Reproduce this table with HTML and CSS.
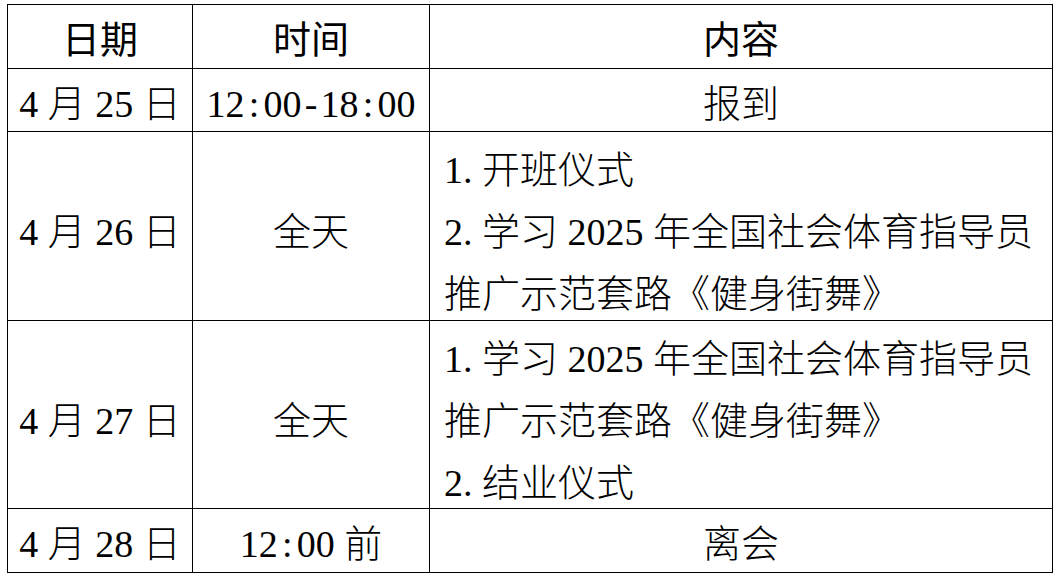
FILE: index.html
```html
<!DOCTYPE html>
<html lang="zh-CN">
<head>
<meta charset="utf-8">
<title>日程安排</title>
<link rel="stylesheet" href="styles.css">
</head>
<body>
<table class="schedule">
  <colgroup>
    <col class="c-date">
    <col class="c-time">
    <col class="c-content">
  </colgroup>
  <thead>
    <tr class="r-head">
      <th>日期</th>
      <th>时间</th>
      <th>内容</th>
    </tr>
  </thead>
  <tbody>
    <tr class="r-single">
      <td class="center">4 月 25 日</td>
      <td class="center">12<span class="hw">:</span>00<span class="hw">-</span>18<span class="hw">:</span>00</td>
      <td class="center">报到</td>
    </tr>
    <tr class="r-triple">
      <td class="center tall">4 月 26 日</td>
      <td class="center tall">全天</td>
      <td class="content"><div class="lines">1<span class="dot">.</span>开班仪式<br>2<span class="dot">.</span>学习 2025 年全国社会体育指导员<br>推广示范套路《健身街舞》</div></td>
    </tr>
    <tr class="r-triple2">
      <td class="center tall">4 月 27 日</td>
      <td class="center tall">全天</td>
      <td class="content"><div class="lines">1<span class="dot">.</span>学习 2025 年全国社会体育指导员<br>推广示范套路《健身街舞》<br>2<span class="dot">.</span>结业仪式</div></td>
    </tr>
    <tr class="r-last">
      <td class="center">4 月 28 日</td>
      <td class="center">12<span class="hw">:</span>00 前</td>
      <td class="center">离会</td>
    </tr>
  </tbody>
</table>
</body>
</html>
```
FILE: styles.css
```css
html, body {
  margin: 0;
  padding: 0;
  background: #ffffff;
}

body {
  padding: 4px 0 0 7px;
  font-family: "Liberation Serif", "Noto Sans CJK SC", serif;
  color: #000000;
}

.schedule {
  border-collapse: collapse;
  table-layout: fixed;
  width: 1045px;
  font-size: 38px;
  font-weight: 300;
}

.c-date { width: 185px; }
.c-time { width: 237px; }
.c-content { width: 623px; }

.schedule th,
.schedule td {
  border: 1.5px solid #000000;
  padding: 8px 0 0 0;
  vertical-align: middle;
  line-height: 47px;
  text-align: center;
}

.schedule th {
  font-weight: 400;
}

.r-head { height: 64px; }
.r-single { height: 63px; }
.r-triple { height: 189px; }
.r-triple2 { height: 188px; }
.r-last { height: 64px; }

.schedule .tall {
  padding-top: 13px;
}

.schedule .content {
  text-align: left;
  padding: 7px 10px 0 14px;
  white-space: nowrap;
  line-height: 62px;
  vertical-align: top;
}

.lines {
  margin-bottom: -6px;
}

.hw {
  display: inline-block;
  width: 0.5em;
  text-align: center;
}

.dot {
  display: inline-block;
  width: 0.5em;
  text-align: left;
}
```
